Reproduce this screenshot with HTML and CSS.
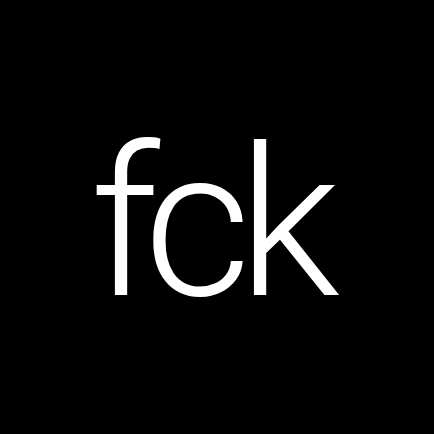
FILE: index.html
```html
<!DOCTYPE html>
<html>
<head>
<meta charset="utf-8">
<link rel="stylesheet" href="styles.css">
</head>
<body>
<div class="screen">
  <span class="logo">fck</span>
</div>
</body>
</html>
```
FILE: styles.css
```css
html, body {
  margin: 0;
  padding: 0;
  background: #000;
}
.screen {
  width: 434px;
  height: 434px;
  background: #000;
  display: flex;
  align-items: center;
  justify-content: center;
}
.logo {
  font-family: Roboto, "Liberation Sans", sans-serif;
  font-weight: 300;
  font-size: 208px;
  line-height: 1;
  color: #fff;
  letter-spacing: -13px;
  padding-right: 17px;
  margin-top: 14px;
}
```
